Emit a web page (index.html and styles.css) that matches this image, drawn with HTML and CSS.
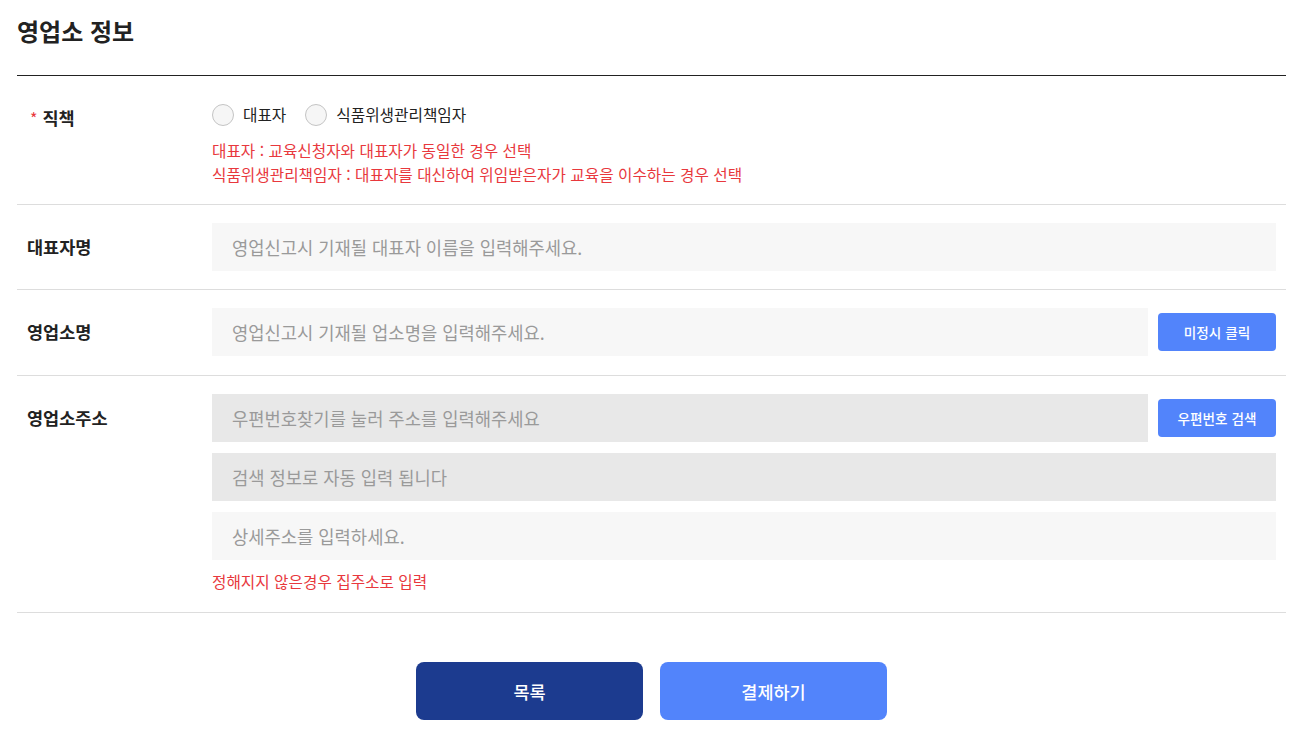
FILE: index.html
```html
<!DOCTYPE html>
<html lang="ko">
<head>
  <meta charset="UTF-8">
  <title>영업소 정보</title>
  <link rel="stylesheet" href="styles.css">
</head>
<body>

<div class="contenedor">
  <h2 class="titulo">영업소 정보</h2>

  <div class="fila">
    <div class="etiqueta etiqueta-radio"><span class="req">*</span> 직책</div>
    <div class="campo">
      <div class="radios">
        <label class="radio"><input type="radio" name="cargo"><span class="circulo"></span>대표자</label>
        <label class="radio"><input type="radio" name="cargo"><span class="circulo"></span>식품위생관리책임자</label>
      </div>
      <p class="aviso aviso-radio">대표자 : 교육신청자와 대표자가 동일한 경우 선택<br>식품위생관리책임자 : 대표자를 대신하여 위임받은자가 교육을 이수하는 경우 선택</p>
    </div>
  </div>

  <div class="fila">
    <div class="etiqueta">대표자명</div>
    <div class="campo">
      <input class="entrada" type="text" placeholder="영업신고시 기재될 대표자 이름을 입력해주세요.">
    </div>
  </div>

  <div class="fila fila-boton">
    <div class="etiqueta">영업소명</div>
    <div class="campo">
      <div class="linea">
        <input class="entrada" type="text" placeholder="영업신고시 기재될 업소명을 입력해주세요.">
        <button class="boton-chico">미정시 클릭</button>
      </div>
    </div>
  </div>

  <div class="fila">
    <div class="etiqueta">영업소주소</div>
    <div class="campo">
      <div class="linea">
        <input class="entrada gris" type="text" readonly placeholder="우편번호찾기를 눌러 주소를 입력해주세요">
        <button class="boton-chico">우편번호 검색</button>
      </div>
      <input class="entrada gris" type="text" readonly placeholder="검색 정보로 자동 입력 됩니다">
      <input class="entrada" type="text" placeholder="상세주소를 입력하세요.">
      <p class="aviso">정해지지 않은경우 집주소로 입력</p>
    </div>
  </div>

  <div class="acciones">
    <button class="boton-grande oscuro">목록</button>
    <button class="boton-grande claro">결제하기</button>
  </div>
</div>

</body>
</html>
```

FILE: styles.css
```css
body {
  margin: 0;
  padding: 0;
  font-family: "Noto Sans CJK KR", "Noto Sans", sans-serif;
  background-color: #ffffff;
  color: #222222;
}

.contenedor {
  padding: 0 20px 0 17px;
}

.titulo {
  margin: 0;
  padding: 16px 0 29px;
  font-size: 24px;
  line-height: 30px;
  font-weight: bold;
  color: #222222;
  border-bottom: 1px solid #222222;
}

.fila {
  display: flex;
  padding: 18px 10px 18px 0;
  border-bottom: 1px solid #dddddd;
}

.fila:first-of-type {
  padding-top: 28px;
  padding-bottom: 17px;
}

.fila-boton {
  padding-bottom: 19px;
}

.etiqueta {
  width: 185px;
  flex-shrink: 0;
  padding-left: 10px;
  font-size: 17.5px;
  font-weight: bold;
  line-height: 48px;
  color: #222222;
}

.etiqueta-radio {
  padding-left: 13px;
  width: 182px;
  line-height: 22px;
  margin-top: 3px;
}

.req {
  color: #e8383d;
  font-weight: normal;
  font-size: 16px;
}

.campo {
  flex: 1;
  display: flex;
  flex-direction: column;
  gap: 11px;
}

.radios {
  display: flex;
  gap: 19px;
  height: 22px;
}

.radio {
  display: flex;
  align-items: center;
  font-size: 15.7px;
  line-height: 22px;
  color: #222222;
  cursor: pointer;
}

.radio input {
  display: none;
}

.circulo {
  width: 20px;
  height: 20px;
  border: 1px solid #c4c4c4;
  border-radius: 50%;
  background-color: #f6f6f6;
  margin-right: 9px;
}

.aviso {
  margin: -1px 0 0;
  font-size: 15.7px;
  line-height: 24px;
  color: #e8383d;
}

.aviso-radio {
  margin-top: 2px;
}

.linea {
  display: flex;
  align-items: center;
  gap: 10px;
}

.entrada {
  flex: none;
  width: 100%;
  box-sizing: border-box;
  height: 48px;
  padding: 0 20px;
  border: none;
  outline: none;
  background-color: #f7f7f7;
  font-family: inherit;
  font-size: 17.7px;
  color: #222222;
}

.linea .entrada {
  flex: 1;
  width: auto;
  min-width: 0;
}

.entrada::placeholder {
  color: #9a9a9a;
}

.entrada.gris {
  background-color: #e8e8e8;
}

.boton-chico {
  width: 118px;
  height: 38px;
  flex-shrink: 0;
  border: none;
  border-radius: 4px;
  background-color: #5284fb;
  color: #ffffff;
  font-family: inherit;
  font-size: 13.6px;
  font-weight: 500;
  cursor: pointer;
}

.acciones {
  display: flex;
  justify-content: center;
  gap: 17px;
  margin-top: 49px;
}

.boton-grande {
  width: 227px;
  height: 58px;
  border: none;
  border-radius: 8px;
  color: #ffffff;
  font-family: inherit;
  font-size: 17.5px;
  font-weight: 500;
  cursor: pointer;
}

.oscuro {
  background-color: #1c3b8f;
}

.claro {
  background-color: #5284fb;
}
```
